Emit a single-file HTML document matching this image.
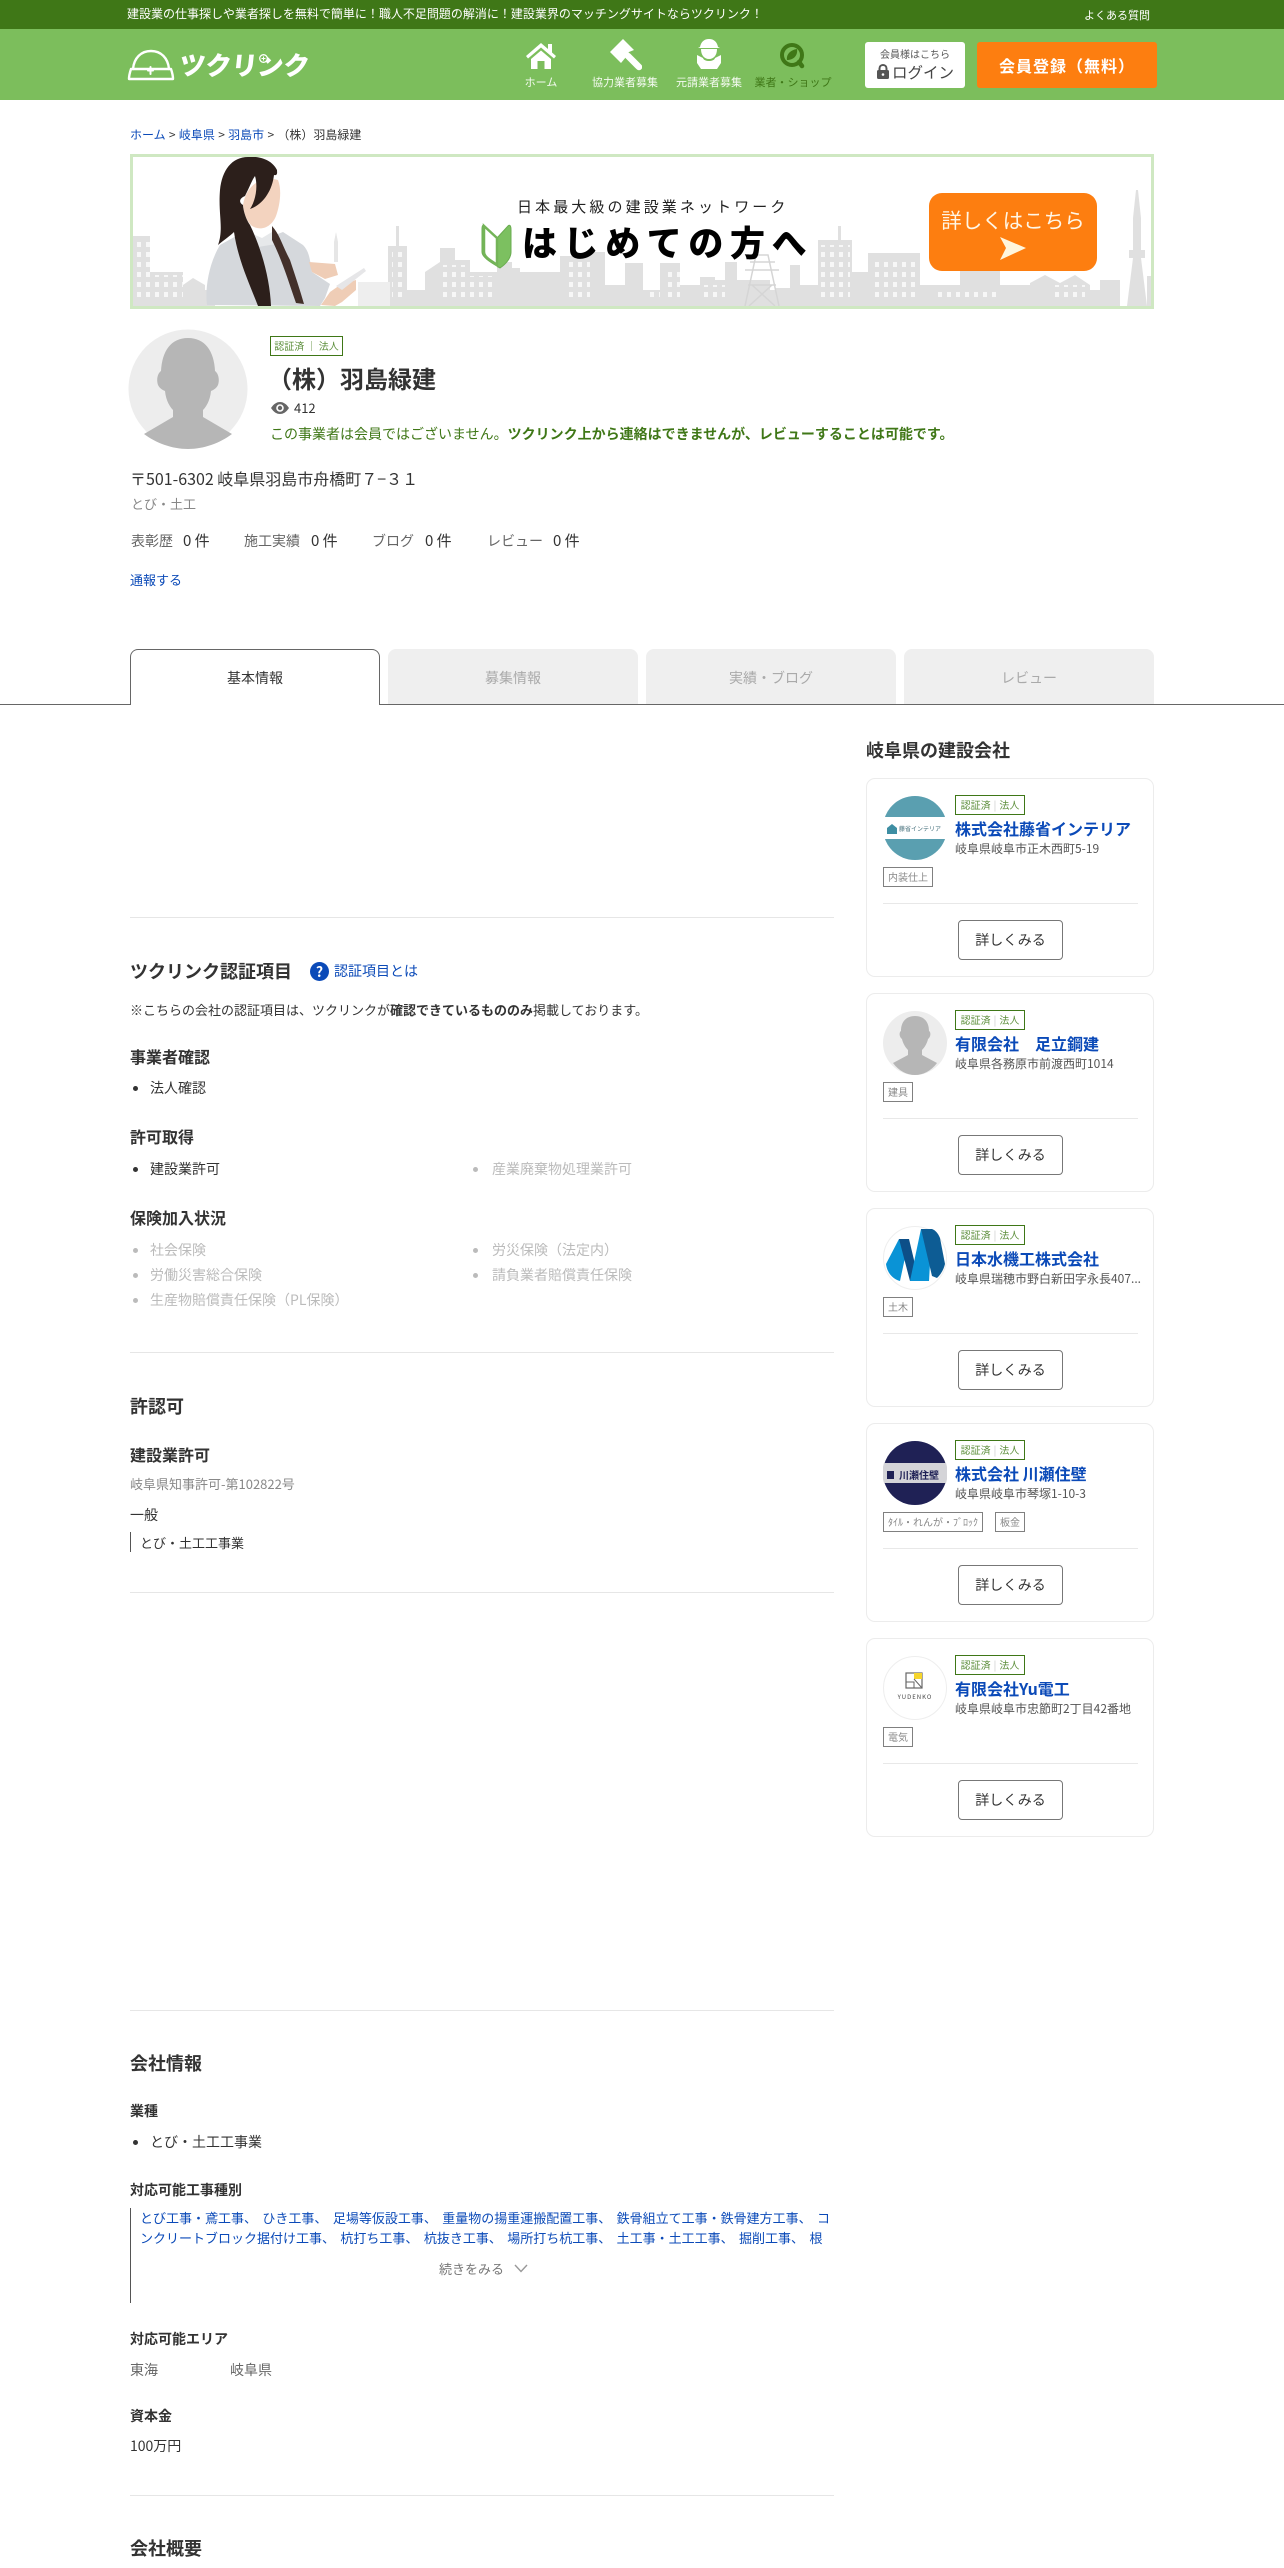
<!DOCTYPE html>
<html lang="ja"><head><meta charset="utf-8"><title>（株）羽島緑建 | ツクリンク</title>
<style>
html,body{margin:0;padding:0;background:#fff}
body{width:1284px;height:2568px;position:relative;overflow:hidden;font-family:"Noto Sans CJK JP","Liberation Sans",sans-serif;color:#333;font-size:14px}
.t{position:absolute;white-space:nowrap;line-height:20px}
.b{font-weight:700}
.a{color:#0b4ab8}
.h18{font-size:18px;font-weight:700;left:130px}
.h16{font-size:16px;font-weight:700;left:130px}
.h14{font-size:14px;font-weight:700;left:130px}
.hr{position:absolute;left:130px;width:704px;height:1px;background:#e6e6e6}
.dot{position:absolute;width:5px;height:5px;border-radius:50%;background:#333}
.g{color:#bbb}.gd{background:#bbb}
.nav{position:absolute;top:72px;width:110px;text-align:center;font-size:11px;line-height:20px;color:#f4faf0;white-space:nowrap}
.tab{position:absolute;top:649px;width:250px;height:55px;box-sizing:border-box;background:#efefef;border-radius:8px 8px 0 0;text-align:center;line-height:59px;font-size:14px;color:#aaa}
.card{position:absolute;left:866px;width:288px;height:199px;box-sizing:border-box;border:1px solid #ececec;border-radius:9px;background:#fff}
.card>*{position:absolute}
.card .logo{left:16px;top:17px;width:64px;height:64px}
.bd{left:88px;top:16px;width:70px;height:20px;box-sizing:border-box;border:1px solid #3f7717;font-size:10px;line-height:18px;color:#5d8f3c;text-align:center;white-space:nowrap}
.bd i{font-style:normal;color:#ccc;padding:0 3px}
.ti{left:88px;top:38px;font-size:16px;font-weight:700;line-height:22px;color:#0b4ab8;white-space:nowrap}
.ad{left:88px;top:61px;font-size:12px;line-height:18px;color:#555;white-space:nowrap}
.tg{top:88px;height:20px;box-sizing:border-box;border:1px solid #808080;font-size:10px;line-height:18px;color:#888;white-space:nowrap;text-align:center}
.dv{left:16px;top:124px;width:255px;height:1px;background:#e8e8e8}
.btn{left:91px;top:141px;width:105px;height:40px;box-sizing:border-box;border:1px solid #777;border-radius:4px;text-align:center;line-height:38px;font-size:14px;color:#333}
</style></head><body>

<div style="position:absolute;left:0;top:0;width:1284px;height:29px;background:#3f7717"></div>
<div class="t" style="left:127px;top:4px;font-size:12px;color:#fff">建設業の仕事探しや業者探しを無料で簡単に！職人不足問題の解消に！建設業界のマッチングサイトならツクリンク！</div>
<div class="t" style="left:1084px;top:5px;font-size:11px;color:#fff">よくある質問</div>
<div style="position:absolute;left:0;top:29px;width:1284px;height:71px;background:#7cbe5c"></div>

<svg style="position:absolute;left:126px;top:48px" width="50" height="34" viewBox="0 0 50 34" fill="none" stroke="#fff" stroke-width="2.400" stroke-linecap="round" stroke-linejoin="round"><path d="M7 21C8 10 15 3 25 3S42 10 43 21"/><path d="M5 21H18M31 21H45C46 24 47 27 47 31H3C3 27 4 24 5 21Z"/><path d="M24.500 19V26M22 22.500H27" stroke-width="2"/></svg>
<div class="t" style="left:178px;top:50px;font-size:26px;line-height:30px;font-weight:900;color:#fff;transform:skewX(-6deg);transform-origin:left bottom">ツクリンク</div>
<svg style="position:absolute;left:258px;top:53px" width="11" height="11" viewBox="0 0 11 11"><circle cx="5.500" cy="5.500" r="3.800" fill="#7cbe5c" stroke="#fff" stroke-width="1.300"/><path d="M5.500 3.500V7.500M3.500 5.500H7.500" stroke="#fff"/></svg>

<svg style="position:absolute;left:526px;top:43px" width="30" height="27" viewBox="0 0 30 27" fill="#fff"><path d="M15 0L0 13L2 15.500L15 4.500L28 15.500L30 13L26 9.500V1H22V6Z"/><path d="M5 16L15 7.500L25 16V26H18.500V18H11.500V26H5Z"/></svg>
<div class="nav" style="left:486px">ホーム</div>
<svg style="position:absolute;left:608px;top:38px" width="34" height="33" viewBox="0 0 34 33" fill="#fff"><path d="M2 14L15 1L26 12L21 14L18 19L13 25Z"/><path d="M20 18L31 29" stroke="#fff" stroke-width="6.500" stroke-linecap="round"/></svg>
<div class="nav" style="left:570px">協力業者募集</div>
<svg style="position:absolute;left:696px;top:38px" width="26" height="32" viewBox="0 0 26 32" fill="#fff"><path d="M13 1C8 1 5 4 4 9L2 10H24L22 9C21 4 18 1 13 1Z"/><path d="M5 11C5 17 8 21 13 21S21 17 21 11Z"/><path d="M1 17L7 20C8 24 18 24 19 20L25 17V25L21 31H5L1 25Z"/></svg>
<div class="nav" style="left:654px">元請業者募集</div>
<svg style="position:absolute;left:776px;top:41px" width="30" height="29" viewBox="0 0 30 29" fill="none"><circle cx="16" cy="14" r="10" stroke="#3f7717" stroke-width="4"/><path d="M23 21L26 25" stroke="#3f7717" stroke-width="4.500" stroke-linecap="round"/><path d="M11 19C10 14 14 9 21 8C22 14 18 19 11 19Z" fill="#3f7717"/></svg>
<div class="nav" style="left:738px;color:#3f7717">業者・ショップ</div>

<div style="position:absolute;left:865px;top:42px;width:100px;height:46px;background:#fff;border-radius:3px"></div>
<div class="t" style="left:865px;width:100px;text-align:center;top:44px;font-size:10px;color:#555">会員様はこちら</div>
<svg style="position:absolute;left:876px;top:64px" width="14" height="15" viewBox="0 0 14 15"><path d="M3.500 7V4.500C3.500 2.500 5 1 7 1S10.500 2.500 10.500 4.500V7" fill="none" stroke="#555" stroke-width="2"/><rect x="1" y="6" width="12" height="9" rx="1.500" fill="#555"/><circle cx="7" cy="10.500" r="1.300" fill="#fff"/></svg>
<div class="t" style="left:892px;top:62px;font-size:15.500px;color:#444">ログイン</div>
<div style="position:absolute;left:977px;top:42px;width:180px;height:46px;background:#fd7e10;border-radius:3px"></div>
<div class="t b" style="left:977px;width:180px;text-align:center;top:55px;font-size:16px;letter-spacing:1px;color:#fff">会員登録（無料）</div>

<div class="t" style="left:130px;top:125px;font-size:12px;word-spacing:.6px;color:#333"><span class="a">ホーム</span> &gt; <span class="a">岐阜県</span> &gt; <span class="a">羽島市</span> &gt; （株）羽島緑建</div>

<svg style="position:absolute;left:130px;top:154px" width="1024" height="155" viewBox="130 154 1024 155">
<defs><pattern id="w" x="0" y="0" width="9" height="10" patternUnits="userSpaceOnUse"><rect x="2" y="2" width="4" height="5" fill="#fff" opacity=".75"/></pattern></defs>
<rect x="130" y="154" width="1024" height="155" fill="#fff"/>
<path fill="#e0e0e0" d="M133 306V236H150V272H183V285L193 278L205 285V290H215V306ZM360 306V283H388V246H396V226H399V246H407V290H425V272L440 262V248H455V260H470V272H497V262H512V268H520V272H575V306H562V262H565V306ZM520 306V285H535V275H560V306ZM560 306V256H590V252H605V285H625V263H643V290H660V263H680V285H700V277H715V306ZM700 306V280H725V262H737V280H770V290H800V306ZM775 306V288H790V265H800V285H818V240H838V226H841V240H852V272H868V306ZM868 306V253H920V306ZM920 306V285H960V270H1000V285H1030V306ZM1030 306V283L1045 275L1060 283L1075 275L1090 285V306ZM1090 306V290H1100V280H1120V306ZM1127 306L1133 258H1129V250H1133V218L1136 190H1138L1141 218V250H1145V258H1141L1147 306ZM1147 306V276H1151V306Z"/>
<path fill="url(#w)" d="M133 240H150V300H133ZM150 275H183V300H150ZM360 288H388V300H360ZM392 250H405V300H392ZM443 265H468V300H443ZM470 276H497V300H470ZM565 260H590V300H565ZM668 268H680V300H668ZM648 268H660V300H648ZM700 285H725V300H700ZM820 245H850V300H820ZM872 258H918V300H872ZM935 290H1000V300H935ZM1050 285H1085V300H1050Z"/>
<path d="M745 306L756 255H768L779 306M745 270H779M750 262H775M748 285H776M752 285L775 306M772 285L749 306" fill="none" stroke="#d5d5d5" stroke-width="1.500"/>
<path d="M334 262V242L336 232L338 242V262Z" fill="#e6e6e6"/>
<path d="M358 306V282H390V306Z" fill="#eeeeee"/>

<path d="M207 305C205 290 208 265 220 245L247 230L262 240L283 232L303 245C310 252 310 262 312 272L330 284L325 298L320 306Z" fill="#d5d8dc"/>
<path d="M246 231L258 247L282 243L272 232L262 238Z" fill="#e6e8ea"/>
<path d="M258 247L270 305" stroke="#bfc3c7" stroke-width="1" fill="none"/>
<path d="M243 205C246 185 262 175 278 180C282 190 280 205 276 216C272 226 262 232 252 226C247 222 244 214 243 205Z" fill="#f3d3bf"/>
<path d="M272 226C280 235 282 245 290 260C295 275 300 290 304 304L296 303C288 280 282 260 272 240Z" fill="#43302a"/>
<path d="M248 157C232 157 222 170 220 190C218 215 224 228 218 245C224 240 230 236 234 232C238 260 250 285 258 306H271C270 280 262 250 250 225C245 218 243 208 243 205C238 202 240 198 245 196C250 186 252 180 255 176C258 186 256 200 250 209C262 205 272 192 274 175C278 176 277 172 277 170C272 160 260 156 248 157Z" fill="#2c1f1b"/>
<path d="M309 262L335 264L338 275L325 279L312 272Z" fill="#efcdb6"/>
<path d="M321 305L330 292L340 285L356 280L356 290L342 302L335 306Z" fill="#efcdb6"/>
<path d="M336 286L364 268L366 271L342 290Z" fill="#e6e6e8"/>
<path d="M484 226C482 224 482 228 482 230V252C482 258 494 264 500 268C506 264 511 258 511 252V230C511 226 510 224 508 226L497 238Z" fill="#7cc060" stroke="#6aac50" stroke-width="1"/>
<path d="M497 238L484 226V252C484 258 494 262 497 265Z" fill="#fff" stroke="#74b458" stroke-width="2.500"/>
<rect x="929" y="193" width="168" height="78" rx="13" fill="#fd7e10"/>
<path d="M1000 237L1026 248L1000 260L1006 248Z" fill="#fff6dd"/>
<text x="517" y="212" font-size="15" letter-spacing="3.100" fill="#222">日本最大級の建設業ネットワーク</text>
<text x="522" y="256" font-size="35" font-weight="900" letter-spacing="6.600" fill="#000">はじめての方へ</text>
<text x="1013" y="228" font-size="20.500" text-anchor="middle" fill="#fff6e6">詳しくはこちら</text>
<rect x="131.500" y="155.500" width="1021" height="152" fill="none" stroke="#cfe8c2" stroke-width="3"/>
</svg>

<svg style="position:absolute;left:128px;top:329px" width="120" height="120" viewBox="0 0 120 120"><circle cx="60" cy="60" r="59.500" fill="#ededed"/><path d="M60 9C43 9 34 22 33 42C30 44 28 50 30 56C32 60 35 61 37 62C38 72 42 78 45 81V88L16 105C28 114 44 120 60 120S92 114 104 105L75 88V81C78 78 82 72 83 62C85 61 88 60 90 56C92 50 90 44 87 42C86 22 77 9 60 9Z" fill="#b6b6b6"/></svg>
<div class="t" style="left:270px;top:336px;width:73px;height:20px;box-sizing:border-box;border:1px solid #3f7717;font-size:10px;line-height:18px;color:#5d8f3c;text-align:center">認証済 ｜ 法人</div>
<div class="t b" style="left:268px;top:360px;font-size:24px;line-height:36px">（株）羽島緑建</div>
<svg style="position:absolute;left:271px;top:402px" width="18" height="12" viewBox="0 0 18 12"><path d="M0 6C3 1.500 6 0 9 0S15 1.500 18 6C15 10.500 12 12 9 12S3 10.500 0 6Z" fill="#666"/><circle cx="9" cy="6" r="3.800" fill="#fff"/><circle cx="9" cy="6" r="2.200" fill="#666"/></svg>
<div class="t" style="left:294px;top:398px;font-size:13px">412</div>
<div class="t" style="left:270px;top:424px;font-size:14px;color:#3f7717">この事業者は会員ではございません。<span class="b">ツクリンク上から連絡はできませんが、レビューすることは可能です。</span></div>
<div class="t" style="left:130px;top:468px;font-size:16px">〒501-6302 岐阜県羽島市舟橋町７−３１</div>
<div class="t" style="left:131px;top:494px;font-size:13px;color:#888">とび・土工</div>
<div class="t" style="left:131px;top:531px;font-size:14px;color:#666">表彰歴</div><div class="t" style="left:183px;top:531px;font-size:15px">0 件</div>
<div class="t" style="left:244px;top:531px;font-size:14px;color:#666">施工実績</div><div class="t" style="left:311px;top:531px;font-size:15px">0 件</div>
<div class="t" style="left:372px;top:531px;font-size:14px;color:#666">ブログ</div><div class="t" style="left:425px;top:531px;font-size:15px">0 件</div>
<div class="t" style="left:487px;top:531px;font-size:14px;color:#666">レビュー</div><div class="t" style="left:553px;top:531px;font-size:15px">0 件</div>
<div class="t a" style="left:130px;top:570px;font-size:13px">通報する</div>

<div style="position:absolute;left:0;top:704px;width:1284px;height:1px;background:#666"></div>
<div class="tab" style="left:130px;background:#fff;border:1px solid #666;border-bottom:0;color:#333;height:56px;line-height:57px">基本情報</div>
<div class="tab" style="left:388px">募集情報</div>
<div class="tab" style="left:646px">実績・ブログ</div>
<div class="tab" style="left:904px">レビュー</div>

<div class="hr" style="top:917px"></div>
<div class="t h18" style="top:961px">ツクリンク認証項目</div>
<svg style="position:absolute;left:310px;top:962px" width="19" height="19" viewBox="0 0 19 19"><circle cx="9.500" cy="9.500" r="9.500" fill="#0b4ab8"/><text x="9.500" y="15" font-size="14" font-weight="700" text-anchor="middle" fill="#fff">?</text></svg>
<div class="t a" style="left:334px;top:961px;font-size:14px">認証項目とは</div>
<div class="t" style="left:130px;top:1000px;font-size:13px">※こちらの会社の認証項目は、ツクリンクが<span class="b">確認できているもののみ</span>掲載しております。</div>
<div class="t h16" style="top:1046px">事業者確認</div>
<div class="dot" style="left:133px;top:1086px"></div><div class="t" style="left:150px;top:1078px">法人確認</div>
<div class="t h16" style="top:1126px">許可取得</div>
<div class="dot" style="left:133px;top:1167px"></div><div class="t" style="left:150px;top:1159px">建設業許可</div>
<div class="dot gd" style="left:473px;top:1167px"></div><div class="t g" style="left:492px;top:1159px">産業廃棄物処理業許可</div>
<div class="t h16" style="top:1207px">保険加入状況</div>
<div class="dot gd" style="left:133px;top:1248px"></div><div class="t g" style="left:150px;top:1240px">社会保険</div>
<div class="dot gd" style="left:473px;top:1248px"></div><div class="t g" style="left:492px;top:1240px">労災保険（法定内）</div>
<div class="dot gd" style="left:133px;top:1273px"></div><div class="t g" style="left:150px;top:1265px">労働災害総合保険</div>
<div class="dot gd" style="left:473px;top:1273px"></div><div class="t g" style="left:492px;top:1265px">請負業者賠償責任保険</div>
<div class="dot gd" style="left:133px;top:1298px"></div><div class="t g" style="left:150px;top:1290px">生産物賠償責任保険（PL保険）</div>
<div class="hr" style="top:1352px"></div>

<div class="t h18" style="top:1396px">許認可</div>
<div class="t h16" style="top:1444px">建設業許可</div>
<div class="t" style="left:130px;top:1474px;font-size:13px;color:#888">岐阜県知事許可-第102822号</div>
<div class="t" style="left:130px;top:1505px;font-size:14px">一般</div>
<div style="position:absolute;left:130px;top:1532px;width:1px;height:20px;background:#555"></div>
<div class="t" style="left:140px;top:1533px;font-size:13px">とび・土工工事業</div>
<div class="hr" style="top:1592px"></div>
<div class="hr" style="top:2010px"></div>

<div class="t h18" style="top:2053px">会社情報</div>
<div class="t h14" style="top:2101px">業種</div>
<div class="dot" style="left:133px;top:2140px"></div><div class="t" style="left:150px;top:2132px">とび・土工工事業</div>
<div class="t h14" style="top:2180px">対応可能工事種別</div>
<div style="position:absolute;left:130px;top:2208px;width:1px;height:95px;background:#555"></div>
<div style="position:absolute;left:140px;top:2208px;width:692px;overflow:hidden;font-size:13px;line-height:20px;height:41px;word-spacing:2.500px;color:#0b4ab8;white-space:nowrap">とび工事・鳶工事、 ひき工事、 足場等仮設工事、 重量物の揚重運搬配置工事、 鉄骨組立て工事・鉄骨建方工事、 コ<br>ンクリートブロック据付け工事、 杭打ち工事、 杭抜き工事、 場所打ち杭工事、 土工事・土工工事、 掘削工事、 根</div>
<div class="t" style="left:439px;top:2259px;font-size:13px;color:#777">続きをみる</div>
<svg style="position:absolute;left:514px;top:2264px" width="14" height="9" viewBox="0 0 14 9"><path d="M1 1L7 7.500L13 1" fill="none" stroke="#999" stroke-width="1.400"/></svg>
<div class="t h14" style="top:2329px">対応可能エリア</div>
<div class="t" style="left:130px;top:2360px;font-size:14px;color:#666">東海</div>
<div class="t" style="left:230px;top:2360px;font-size:14px;color:#666">岐阜県</div>
<div class="t h14" style="top:2406px">資本金</div>
<div class="t" style="left:130px;top:2436px;font-size:14px">100万円</div>
<div class="hr" style="top:2495px"></div>
<div class="t h18" style="top:2538px">会社概要</div>

<div class="t b" style="left:866px;top:738px;font-size:18px;line-height:24px">岐阜県の建設会社</div>

<div class="card" style="top:778px">
<svg class="logo" viewBox="0 0 64 64"><circle cx="32" cy="32" r="32" fill="#5a9fb0"/><path d="M1 21H63C65 28 65 36 63 43H1C-1 36 -1 28 1 21Z" fill="#fff"/><path d="M4 32L9 28L14 32V38H4Z" fill="#3e8ea3"/><text x="37" y="35" font-size="6" text-anchor="middle" fill="#46707c">藤省インテリア</text></svg>
<div class="bd">認証済<i>|</i>法人</div><div class="ti">株式会社藤省インテリア</div><div class="ad">岐阜県岐阜市正木西町5-19</div>
<div class="tg" style="left:16px;width:50px">内装仕上</div><div class="dv"></div><div class="btn">詳しくみる</div></div>

<div class="card" style="top:993px">
<svg class="logo" viewBox="0 0 64 64"><circle cx="32" cy="32" r="32" fill="#ededed"/><path d="M32 5C23 5 18 11 18 20C16 21 16 26 19 28C20 33 23 37 25 39V44L10 52C16 60 24 64 32 64S48 60 54 52L39 44V39C41 37 44 33 45 28C48 26 48 21 46 20C46 11 41 5 32 5Z" fill="#b6b6b6"/></svg>
<div class="bd">認証済<i>|</i>法人</div><div class="ti">有限会社　足立鋼建</div><div class="ad">岐阜県各務原市前渡西町1014</div>
<div class="tg" style="left:16px;width:30px">建具</div><div class="dv"></div><div class="btn">詳しくみる</div></div>

<div class="card" style="top:1208px">
<svg class="logo" viewBox="0 0 64 64"><circle cx="32" cy="32" r="31.500" fill="#fff" stroke="#eee"/><path d="M3 38L16 13H26L17 55C9 53 4 46 3 38Z" fill="#0a93d6"/><path d="M16 13H26L36 55L27 55Z" fill="#0d4f88"/><path d="M27 55L38 3H49L46 55Z" fill="#0a93d6"/><path d="M38 3H49C52 4 55 7 57 12L62 38C60 46 56 50 54 52L49 50Z" fill="#0d5c94"/></svg>
<div class="bd">認証済<i>|</i>法人</div><div class="ti">日本水機工株式会社</div><div class="ad">岐阜県瑞穂市野白新田字永長407...</div>
<div class="tg" style="left:16px;width:30px">土木</div><div class="dv"></div><div class="btn">詳しくみる</div></div>

<div class="card" style="top:1423px">
<svg class="logo" viewBox="0 0 64 64"><circle cx="32" cy="32" r="32" fill="#1f2155"/><path d="M1 22H63C65 28 65 36 63 42H1C-1 36 -1 28 1 22Z" fill="#d4d4d8"/><text x="36" y="38" font-size="10" font-weight="700" text-anchor="middle" fill="#1f2155">川瀬住壁</text><rect x="4" y="30" width="7" height="8" fill="#1f2155"/></svg>
<div class="bd">認証済<i>|</i>法人</div><div class="ti">株式会社 川瀬住壁</div><div class="ad">岐阜県岐阜市琴塚1-10-3</div>
<div class="tg" style="left:16px;width:100px">ﾀｲﾙ・れんが・ﾌﾞﾛｯｸ</div><div class="tg" style="left:128px;width:30px">板金</div><div class="dv"></div><div class="btn">詳しくみる</div></div>

<div class="card" style="top:1638px">
<svg class="logo" viewBox="0 0 64 64"><circle cx="32" cy="32" r="31.500" fill="#fff" stroke="#eee"/><rect x="23" y="17" width="16" height="15" fill="#fff" stroke="#666" stroke-width="1.200"/><rect x="31" y="17" width="8" height="6" fill="#f6d52c"/><path d="M31 23L39 32M23 26H31V32" fill="none" stroke="#666"/><text x="32" y="43" font-size="6" letter-spacing="1" text-anchor="middle" fill="#444">YUDENKO</text></svg>
<div class="bd">認証済<i>|</i>法人</div><div class="ti">有限会社Yu電工</div><div class="ad">岐阜県岐阜市忠節町2丁目42番地</div>
<div class="tg" style="left:16px;width:30px">電気</div><div class="dv"></div><div class="btn">詳しくみる</div></div>

</body></html>
